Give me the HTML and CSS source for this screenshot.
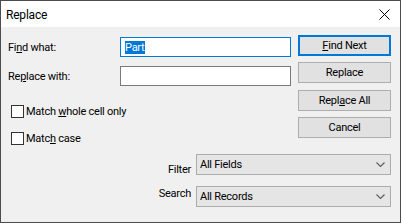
FILE: index.html
```html
<!DOCTYPE html>
<html>
<head>
<meta charset="utf-8">
<link rel="stylesheet" href="styles.css">
</head>
<body>
<div class="window">
  <div class="titlebar">
    <span class="title">Replace</span>
    <svg class="close" width="11" height="11" viewBox="0 0 11 11"><path d="M0.5 0.5 L10.5 10.5 M10.5 0.5 L0.5 10.5" stroke="#000" stroke-width="1" fill="none"/></svg>
  </div>
  <div class="content">
    <div class="top">
      <div class="fields">
        <div class="field-row first">
          <label class="label">Fi<u>n</u>d what:</label>
          <div class="textbox focused"><span class="sel">Part</span></div>
        </div>
        <div class="field-row second">
          <label class="label">Re<u>p</u>lace with:</label>
          <div class="textbox"></div>
        </div>
        <div class="check-row cb1">
          <span class="checkbox"></span>
          <span class="check-label">Match <u>w</u>hole cell only</span>
        </div>
        <div class="check-row cb2">
          <span class="checkbox"></span>
          <span class="check-label">Matc<u>h</u> case</span>
        </div>
      </div>
      <div class="buttons">
        <div class="btn default"><u>F</u>ind Next</div>
        <div class="btn b2">Replace</div>
        <div class="btn b3">Repl<u>a</u>ce All</div>
        <div class="btn b4">Cancel</div>
      </div>
    </div>
    <div class="bottom">
      <div class="select-row filter">
        <span class="sel-label">Filter</span>
        <div class="select"><span>All Fields</span><svg class="chev" width="9" height="5" viewBox="0 0 9 5"><path d="M0.5 0.5 L4.5 4.5 L8.5 0.5" stroke="#5c5c5c" stroke-width="1.1" fill="none"/></svg></div>
      </div>
      <div class="select-row search">
        <span class="sel-label">Search</span>
        <div class="select"><span>All Records</span><svg class="chev" width="9" height="5" viewBox="0 0 9 5"><path d="M0.5 0.5 L4.5 4.5 L8.5 0.5" stroke="#5c5c5c" stroke-width="1.1" fill="none"/></svg></div>
      </div>
    </div>
  </div>
</div>
</body>
</html>
```

FILE: styles.css
```css
html, body {
  margin: 0;
  padding: 0;
  background: #ffffff;
}
body {
  font-family: "Roboto", "Liberation Sans", sans-serif;
  font-size: 11px;
  letter-spacing: -0.25px;
  color: #000;
}
.window {
  width: 401px;
  height: 223px;
  box-sizing: border-box;
  border: 1px solid #4d4d4d;
  display: flex;
  flex-direction: column;
  background: #f0f0f0;
}
.titlebar {
  height: 26px;
  background: #ffffff;
  display: flex;
  align-items: center;
  justify-content: space-between;
  padding: 0 10px 0 5px;
  flex: none;
}
.title {
  font-size: 12px;
  letter-spacing: -0.2px;
  padding-top: 1px;
}
.close {
  display: block;
  margin-top: 1px;
}
.content {
  flex: 1;
  display: flex;
  flex-direction: column;
}
.top {
  display: flex;
  padding: 8px 0 0 7px;
}
.fields {
  width: 283px;
  display: flex;
  flex-direction: column;
}
.field-row {
  display: flex;
  align-items: center;
  height: 20px;
}
.field-row.first { margin-top: 2px; }
.field-row.second { margin-top: 9px; }
.label {
  width: 112px;
  flex: none;
}
.textbox {
  width: 171px;
  height: 20px;
  box-sizing: border-box;
  background: #fff;
  border: 1px solid #7a7a7a;
  display: flex;
  align-items: center;
  padding-left: 4px;
}
.textbox.focused {
  border-color: #0078d7;
}
.sel {
  background: #0078d7;
  color: #fff;
  line-height: 13px;
  padding: 0 1px 0 0;
}
.check-row {
  display: flex;
  align-items: center;
  height: 13px;
  padding-left: 3px;
}
.check-row.cb1 { margin-top: 19px; }
.check-row.cb2 { margin-top: 14px; }
.checkbox {
  width: 13px;
  height: 13px;
  box-sizing: border-box;
  border: 1px solid #333;
  background: #fff;
  flex: none;
}
.check-label {
  margin-left: 2px;
}
.buttons {
  margin-left: 7px;
  width: 93px;
  display: flex;
  flex-direction: column;
}
.btn {
  height: 21px;
  box-sizing: border-box;
  background: #e1e1e1;
  border: 1px solid #adadad;
  display: flex;
  align-items: center;
  justify-content: center;
}
.btn.default {
  border: 2px solid #0078d7;
}
.btn.b2 { margin-top: 6px; }
.btn.b3 { margin-top: 7px; }
.btn.b4 { margin-top: 6px; }
.bottom {
  display: flex;
  flex-direction: column;
  padding: 9px 9px 0 0;
}
.select-row {
  display: flex;
  justify-content: flex-end;
  height: 21px;
}
.select-row.search { margin-top: 11px; }
.sel-label {
  margin-right: 5px;
  line-height: 13px;
}
.filter .sel-label { align-self: flex-end; margin-bottom: -1px; }
.search .sel-label { align-self: flex-start; margin-top: 1px; }
.select {
  width: 195px;
  height: 21px;
  box-sizing: border-box;
  background: #e5e5e5;
  border: 1px solid #acacac;
  display: flex;
  align-items: center;
  justify-content: space-between;
  padding: 0 5px 0 3px;
}
.chev { display: block; }
```
